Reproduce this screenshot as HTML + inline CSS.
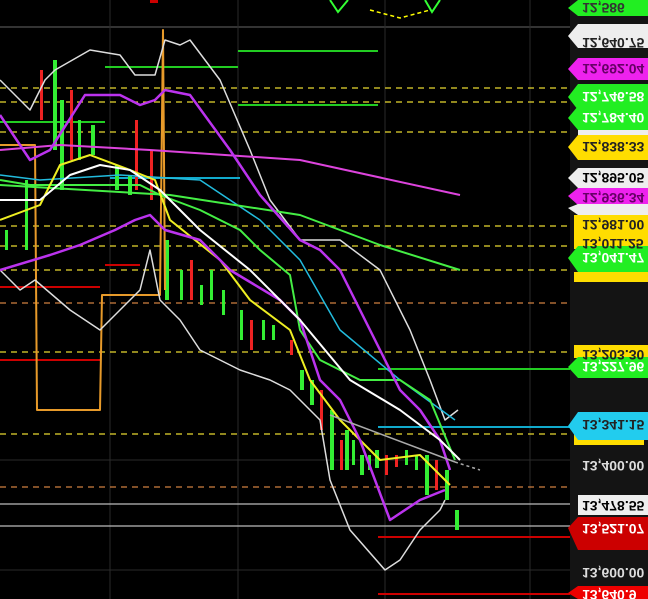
<!DOCTYPE html>
<html><head><style>
html,body{margin:0;padding:0;background:#000;width:648px;height:599px;overflow:hidden}
svg{display:block}
text{font-family:"Liberation Sans",sans-serif;font-size:14px;font-weight:bold}
</style></head><body>
<svg width="648" height="599" viewBox="0 0 648 599">
<rect width="648" height="599" fill="#000"/>
<rect x="570" y="0" width="78" height="599" fill="#141414"/>
<line x1="0" y1="27" x2="570" y2="27" stroke="#333" stroke-width="2"/>
<g stroke="#2a2a2a" stroke-width="1">
<line x1="110" y1="0" x2="110" y2="599"/><line x1="238" y1="0" x2="238" y2="599"/>
<line x1="385" y1="0" x2="385" y2="599"/><line x1="530" y1="0" x2="530" y2="599"/>
<line x1="0" y1="460" x2="570" y2="460"/><line x1="0" y1="570" x2="570" y2="570"/>
</g>
<polyline points="330,0 338,12 348,0" fill="none" stroke="#3f3" stroke-width="2"/>
<polyline points="370,10 400,18 430,10" fill="none" stroke="#ff0" stroke-width="1.5" stroke-dasharray="4 3"/>
<polyline points="425,0 432,12 440,0" fill="none" stroke="#3f3" stroke-width="2"/>
<rect x="150" y="0" width="8" height="3" fill="#c00"/>
<g stroke="#e8d830" stroke-width="1.3" stroke-dasharray="6 5">
<line x1="0" y1="88" x2="570" y2="88"/><line x1="0" y1="102" x2="570" y2="102"/>
<line x1="0" y1="132" x2="570" y2="132"/><line x1="0" y1="226" x2="570" y2="226"/>
<line x1="0" y1="246" x2="570" y2="246"/><line x1="0" y1="270" x2="570" y2="270"/>
<line x1="0" y1="352" x2="570" y2="352"/><line x1="0" y1="434" x2="570" y2="434"/>
</g>
<g stroke="#d08040" stroke-width="1.3" stroke-dasharray="6 5">
<line x1="0" y1="303" x2="570" y2="303"/><line x1="0" y1="487" x2="570" y2="487"/>
</g>
<line x1="0" y1="504" x2="570" y2="504" stroke="#bbb" stroke-width="1.3"/>
<line x1="0" y1="526" x2="570" y2="526" stroke="#bbb" stroke-width="1.3"/>
<g stroke-width="2">
<line x1="238" y1="51" x2="378" y2="51" stroke="#2c2"/>
<line x1="105" y1="67" x2="238" y2="67" stroke="#2c2"/>
<line x1="238" y1="105" x2="378" y2="105" stroke="#2c2"/>
<line x1="0" y1="122" x2="105" y2="122" stroke="#2c2"/>
<line x1="378" y1="369" x2="570" y2="369" stroke="#2c2"/>
<line x1="378" y1="427" x2="570" y2="427" stroke="#1ac"/>
<line x1="0" y1="287" x2="100" y2="287" stroke="#c00"/>
<line x1="105" y1="265" x2="140" y2="265" stroke="#c00"/>
<line x1="0" y1="360" x2="100" y2="360" stroke="#c00"/>
<line x1="378" y1="537" x2="570" y2="537" stroke="#c00"/>
<line x1="378" y1="594" x2="570" y2="594" stroke="#c00"/>
<line x1="110" y1="178" x2="240" y2="178" stroke="#1ac"/>
</g>
<g fill="#3e3">
<rect x="53" y="60" width="4" height="90"/><rect x="60" y="100" width="4" height="90"/>
<rect x="78" y="120" width="3" height="40"/><rect x="91" y="125" width="4" height="30"/>
<rect x="5" y="230" width="3" height="20"/><rect x="25" y="180" width="3" height="70"/>
<rect x="115" y="165" width="4" height="25"/><rect x="128" y="175" width="4" height="20"/>
<rect x="165" y="240" width="4" height="60"/><rect x="180" y="270" width="3" height="30"/>
<rect x="210" y="270" width="3" height="30"/><rect x="240" y="310" width="3" height="30"/>
<rect x="200" y="285" width="3" height="20"/><rect x="222" y="290" width="3" height="25"/>
<rect x="262" y="320" width="3" height="20"/><rect x="272" y="325" width="3" height="15"/>
<rect x="300" y="370" width="4" height="20"/><rect x="310" y="380" width="4" height="25"/>
<rect x="330" y="410" width="4" height="60"/><rect x="345" y="430" width="4" height="40"/>
<rect x="352" y="440" width="3" height="25"/><rect x="368" y="455" width="3" height="15"/>
<rect x="360" y="455" width="4" height="20"/><rect x="375" y="450" width="4" height="18"/>
<rect x="405" y="450" width="3" height="15"/><rect x="415" y="455" width="3" height="15"/>
<rect x="425" y="455" width="4" height="40"/><rect x="445" y="470" width="4" height="30"/>
<rect x="455" y="510" width="4" height="20"/>
</g>
<g fill="#e22">
<rect x="40" y="70" width="3" height="50"/><rect x="70" y="90" width="3" height="70"/>
<rect x="135" y="120" width="3" height="70"/><rect x="150" y="150" width="3" height="50"/>
<rect x="190" y="260" width="3" height="40"/><rect x="250" y="320" width="3" height="30"/>
<rect x="320" y="390" width="3" height="40"/><rect x="340" y="440" width="3" height="30"/>
<rect x="385" y="455" width="3" height="20"/><rect x="435" y="460" width="3" height="30"/>
<rect x="290" y="340" width="3" height="15"/><rect x="395" y="455" width="3" height="12"/>
</g>
<g fill="none" stroke-width="2" stroke-linejoin="round">
<polyline stroke="#e79a2a" points="0,145 35,145 37,410 100,410 102,295 160,295 163,30 165,290 M180,30 188,75 210,75 230,170 245,185 270,235 300,240 350,240 385,380 458,380"/>
<polyline stroke="#ddd" stroke-width="1.5" points="0,80 30,110 45,80 55,70 90,50 120,55 135,75 155,75 165,40 180,45 190,40 220,80 250,150 270,200 300,240 340,240 380,270 410,330 430,380 445,420 458,410"/>
<polyline stroke="#ddd" stroke-width="1.5" points="0,270 20,290 35,280 70,310 100,330 140,290 150,250 160,300 180,320 200,350 240,370 270,380 290,390 320,420 330,480 350,530 385,570 400,560 420,530 440,510 445,500"/>
<polyline stroke="#d4d" points="0,150 60,145 150,150 300,160 460,195"/>
<polyline stroke="#2bd" stroke-width="1.5" points="0,175 40,180 120,175 200,180 260,220 300,260 340,330 400,380 455,420"/>
<polyline stroke="#4e4" points="0,185 170,195 300,215 380,245 460,270"/>
<polyline stroke="#4e4" points="0,180 30,185 100,185 140,185 160,195 200,210 240,230 260,250 290,275 300,330 320,360 360,380 400,380 430,400 455,460"/>
<polyline stroke="#ee2" points="0,220 40,205 60,165 90,155 130,170 155,180 170,220 220,260 250,300 290,330 310,380 340,420 380,460 420,455 450,485"/>
<polyline stroke="#b3e" stroke-width="2.5" points="0,115 30,160 50,150 85,95 120,95 140,105 155,100 165,90 190,95 230,150 260,195 300,240 320,250 340,270 370,330 400,390 420,410 440,440 450,470"/>
<polyline stroke="#b3e" stroke-width="2.5" points="0,270 50,255 80,245 115,230 135,220 150,215 165,230 200,240 230,270 280,300 300,320 320,380 340,400 360,440 390,520 420,500 445,490"/>
<polyline stroke="#fff" points="0,200 40,200 70,175 100,165 130,170 160,190 200,230 250,270 300,320 350,380 400,410 440,440 460,460"/>
<polyline stroke="#aaa" stroke-width="1.5" points="330,415 455,462 M330,485 450,500"/>
<polyline stroke="#aaa" stroke-width="1.5" stroke-dasharray="3 3" points="455,462 480,470 M450,500 480,505"/>
</g>
<g>
<polygon points="568,8 578,0 648,0 648,16 578,16" fill="#2e2"/>
<polygon points="568,36 578,24 648,24 648,48 578,48" fill="#eee"/>
<polygon points="568,69 578,58 648,58 648,80 578,80" fill="#e2e"/>
<polygon points="568,97 578,84 648,84 648,110 578,110" fill="#2e2"/>
<polygon points="568,118 578,106 648,106 648,130 578,130" fill="#2e2"/>
<rect x="578" y="130" width="70" height="6" fill="#eee"/>
<polygon points="568,147 578,135 648,135 648,160 578,160" fill="#fd0"/>
<polygon points="568,178 578,168 648,168 648,188 578,188" fill="#eee"/>
<polygon points="568,196 578,188 648,188 648,205 578,205" fill="#e2e"/>
<polygon points="568,208 578,204 648,204 648,215 578,215" fill="#eee"/>
<rect x="574" y="215" width="74" height="20" fill="#fd0"/>
<rect x="574" y="235" width="74" height="14" fill="#fd0"/>
<polygon points="568,258 578,246 648,246 648,272 578,272" fill="#2e2"/>
<rect x="574" y="272" width="74" height="10" fill="#fd0"/>
<rect x="574" y="345" width="74" height="13" fill="#fd0"/>
<polygon points="568,367 578,357 648,357 648,378 578,378" fill="#2e2"/>
<rect x="574" y="430" width="70" height="15" fill="#fd0"/>
<polygon points="568,426 578,412 648,412 648,440 578,440" fill="#2ce"/>
<rect x="578" y="495" width="70" height="20" fill="#eee"/>
<polygon points="568,528 578,517 648,517 648,550 578,550" fill="#c00"/>
<polygon points="568,593 578,586 648,586 648,599 578,599" fill="#e00"/>
</g>
<g transform="scale(1,-1)" fill="#222">
<text x="582" y="-38">12,640.75</text>
<text x="582" y="-64" fill="#606">12,692.04</text>
<text x="582" y="-92" fill="#fff">12,746.58</text>
<text x="582" y="-113" fill="#fff">12,784.40</text>
<text x="582" y="-142">12,838.33</text>
<text x="582" y="-173" fill="#000">12,895.05</text>
<text x="582" y="-193" fill="#606">12,936.34</text>
<text x="582" y="-220">12,981.00</text>
<text x="582" y="-239">13,011.25</text>
<text x="582" y="-253" fill="#fff">13,041.47</text>
<text x="582" y="-350">13,203.30</text>
<text x="582" y="-362" fill="#fff">13,227.96</text>
<text x="582" y="-420">13,341.15</text>
<text x="582" y="-461" fill="#ddd">13,400.00</text>
<text x="582" y="-501" fill="#000">13,478.55</text>
<text x="582" y="-524" fill="#fff">13,521.07</text>
<text x="582" y="-568" fill="#ddd">13,600.00</text>
<text x="582" y="-590" fill="#fff">13,640.9</text>
<text x="582" y="-3" fill="#333">12,586</text>
</g>
</svg>
</body></html>
